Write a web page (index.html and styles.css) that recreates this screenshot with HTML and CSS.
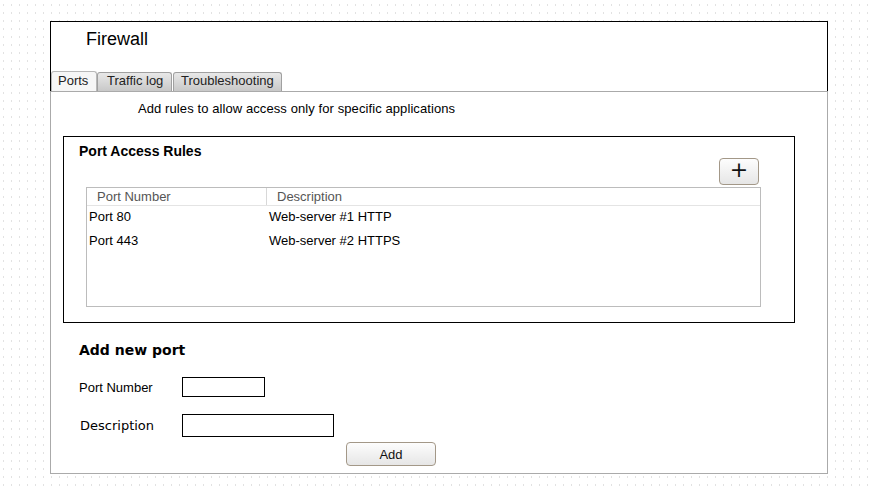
FILE: index.html
```html
<!DOCTYPE html>
<html>
<head>
<meta charset="utf-8">
<link rel="stylesheet" href="styles.css">
</head>
<body>
<div class="window">
  <div class="header">
    <div class="title">Firewall</div>
    <div class="tabs">
      <div class="tab active">Ports</div>
      <div class="tab">Traffic log</div>
      <div class="tab">Troubleshooting</div>
    </div>
  </div>
  <div class="panel">
    <div class="intro">Add rules to allow access only for specific applications</div>
    <div class="rules">
      <div class="rules-title">Port Access Rules</div>
      <div class="rules-tools"><button class="plus">+</button></div>
      <div class="table">
        <div class="thead">
          <div class="th c1">Port Number</div>
          <div class="th c2">Description</div>
        </div>
        <div class="tr"><div class="td c1">Port 80</div><div class="td c2">Web-server #1 HTTP</div></div>
        <div class="tr"><div class="td c1">Port 443</div><div class="td c2">Web-server #2 HTTPS</div></div>
      </div>
    </div>
    <div class="add-title">Add new port</div>
    <div class="form-row r1">
      <div class="label">Port Number</div>
      <div class="input in1"></div>
    </div>
    <div class="form-row r2">
      <div class="label dj">Description</div>
      <div class="input in2"></div>
    </div>
    <div class="btn-row"><button class="add">Add</button></div>
  </div>
</div>
</body>
</html>
```
FILE: styles.css
```css
html, body {
  margin: 0;
  padding: 0;
}
body {
  width: 871px;
  height: 490px;
  overflow: hidden;
  background-color: #fff;
  background-image: radial-gradient(ellipse 0.7px 1.2px at 3.5px 5px, #e2e2e2 80%, transparent 100%);
  background-size: 8px 8px;
  font-family: "Liberation Sans", Arial, sans-serif;
  font-size: 13px;
  color: #000;
  padding: 21px 0 0 50px;
  box-sizing: border-box;
}
.window {
  width: 778px;
}
.header {
  height: 70px;
  border: 1px solid #000;
  border-bottom: none;
  background: #fff;
  box-sizing: border-box;
  display: flex;
  flex-direction: column;
  justify-content: space-between;
}
.title {
  font-size: 18px;
  padding: 7px 0 0 35px;
  line-height: 21px;
}
.tabs {
  display: flex;
  height: 20px;
  align-items: flex-end;
}
.tab {
  height: 19px;
  box-sizing: border-box;
  border: 1px solid #a0a0a0;
  border-bottom: none;
  border-radius: 3px 3px 0 0;
  background: linear-gradient(#e8e8e8, #c8c8c8);
  line-height: 16px;
  color: #222;
}
.tab.active {
  background: #f6f6f6;
  border-color: #b8b8b8;
  height: 20px;
  line-height: 17px;
  padding: 0 0 0 6px;
  width: 46px;
}
.tab:nth-child(2) { width: 75px; padding: 0 0 0 9px; margin-right: 1px; }
.tab:nth-child(3) { width: 109px; padding: 0 0 0 7px; }
.panel {
  height: 383px;
  box-sizing: border-box;
  border: 1px solid #aaa;
  background: #fff;
  padding: 0 0 0 12px;
}
.intro {
  padding: 9px 0 0 75px;
  line-height: 16px;
  height: 35px;
  letter-spacing: 0.09px;
}
.rules {
  width: 732px;
  height: 187px;
  box-sizing: border-box;
  border: 1px solid #000;
  padding: 6px 0 0 15px;
}
.rules-title {
  font-weight: bold;
  font-size: 14px;
  line-height: 17px;
}
.rules-tools {
  display: flex;
  justify-content: flex-end;
  padding-right: 35px;
  margin-top: -2px;
  height: 29px;
}
.plus {
  width: 40px;
  height: 27px;
  box-sizing: border-box;
  border: 1px solid #a39888;
  border-radius: 4px;
  background: linear-gradient(#fdfdfd, #e6e6e6);
  font-family: "DejaVu Sans", sans-serif;
  font-size: 22px;
  line-height: 20px;
  padding: 0 0 3px 0;
  color: #111;
}
.table {
  margin-left: 7px;
  width: 675px;
  height: 120px;
  box-sizing: border-box;
  border: 1px solid #bcbcbc;
}
.thead {
  display: flex;
  height: 18px;
  border-bottom: 1px solid #e4e4e4;
  box-sizing: border-box;
}
.th {
  color: #555;
  line-height: 17px;
  box-sizing: border-box;
}
.th.c1 {
  width: 180px;
  padding-left: 10px;
  border-right: 1px solid #d8d8d8;
}
.th.c2 {
  padding-left: 10px;
}
.tr {
  display: flex;
  height: 24px;
  line-height: 22px;
}
.td {
  box-sizing: border-box;
}
.td.c1 {
  width: 180px;
  padding-left: 2px;
}
.td.c2 {
  padding-left: 2px;
}
.add-title {
  font-family: "DejaVu Sans", sans-serif;
  font-weight: bold;
  font-size: 14px;
  padding: 19px 0 0 16px;
  line-height: 17px;
  height: 35px;
}
.form-row {
  display: flex;
  align-items: center;
  padding-left: 16px;
}
.label {
  width: 103px;
}
.label.dj {
  font-family: "DejaVu Sans", sans-serif;
  padding-left: 1px;
  width: 102px;
}
.r1 { height: 20px; }
.r2 { height: 23px; margin-top: 17px; }
.input {
  box-sizing: border-box;
  border: 1px solid #000;
  background: #fff;
}
.in1 { width: 83px; height: 20px; }
.in2 { width: 152px; height: 23px; }
.btn-row {
  padding: 5px 0 0 283px;
}
.add {
  width: 90px;
  height: 24px;
  box-sizing: border-box;
  border: 1px solid #a39888;
  border-radius: 4px;
  background: linear-gradient(#fdfdfd, #e6e6e6);
  font-family: "Liberation Sans", Arial, sans-serif;
  font-size: 13px;
  color: #111;
  padding: 0;
}
```
